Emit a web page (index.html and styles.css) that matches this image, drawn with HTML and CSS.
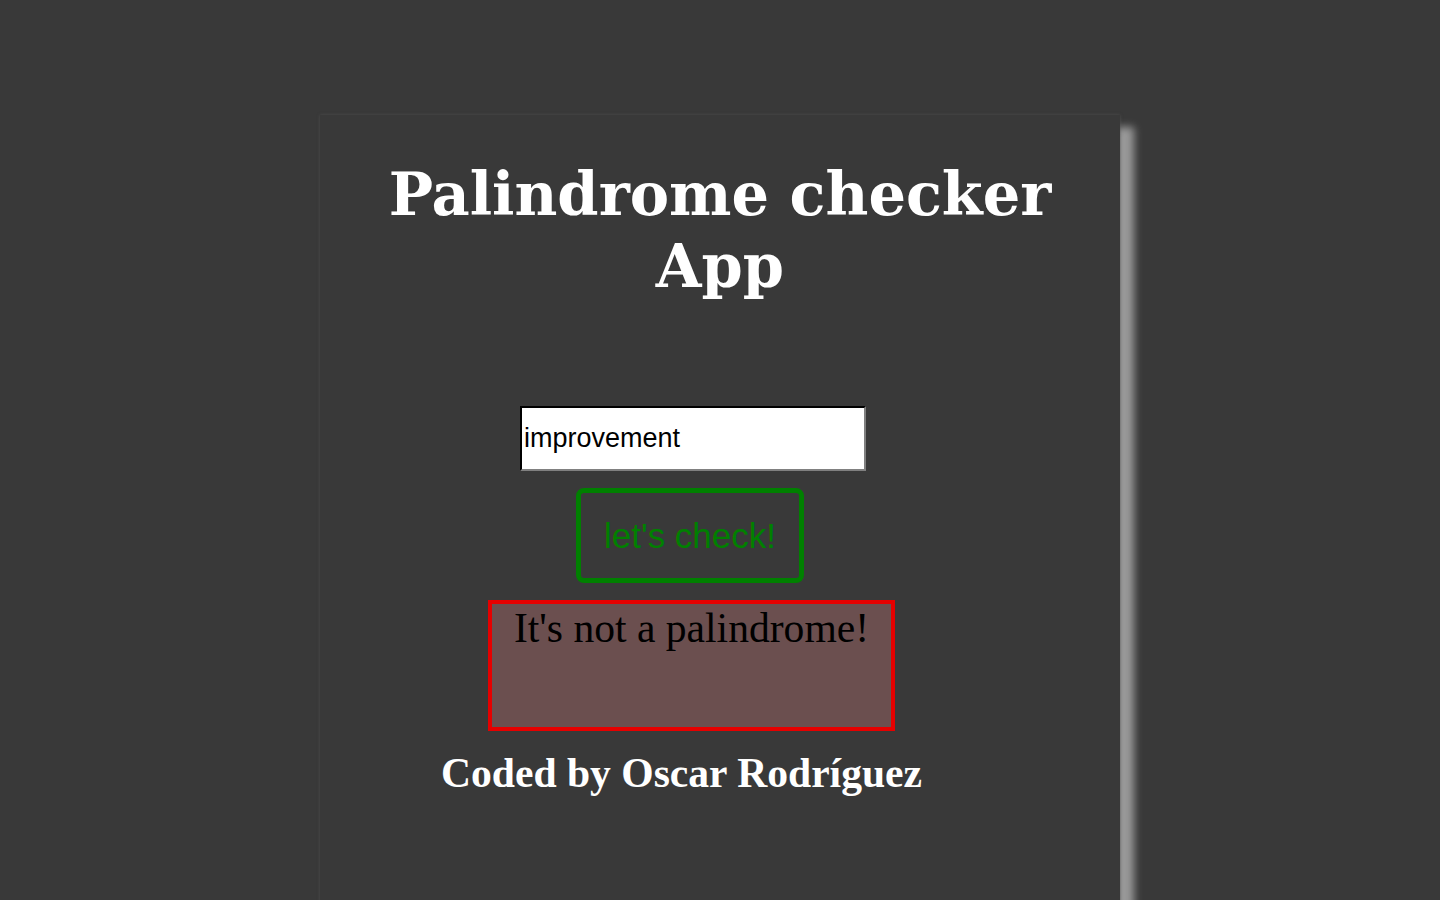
FILE: index.html
```html
<!DOCTYPE html>
<html lang="en">
<head>
<meta charset="utf-8">
<title>Palindrome checker App</title>
<link rel="stylesheet" href="styles.css">
</head>
<body>
<main class="card">
  <h1 class="title">Palindrome checker App</h1>
  <form class="form">
    <input class="word-input" type="text" value="improvement">
    <button class="check-btn" type="button">let's check!</button>
    <div class="result">It's not a palindrome!</div>
  </form>
  <h2 class="credit">Coded by Oscar Rodríguez</h2>
</main>
</body>
</html>
```

FILE: styles.css
```css
html, body {
  margin: 0;
  padding: 0;
  background: #393939;
  height: 100%;
  overflow: hidden;
}

.card {
  width: 800px;
  min-height: 900px;
  margin: 115px auto 0;
  background: #393939;
  box-shadow: 0 0 3px rgba(80, 80, 80, 0.9), 14px 12px 8px #999;
  display: flex;
  flex-direction: column;
  align-items: flex-start;
}

.title {
  align-self: stretch;
  margin: 44px 40px 0;
  font-family: "DejaVu Serif", Georgia, serif;
  font-weight: bold;
  font-size: 59px;
  line-height: 72px;
  color: #fff;
  text-align: center;
}

.form {
  display: flex;
  flex-direction: column;
  align-items: flex-start;
  margin-top: 103px;
}

.word-input {
  box-sizing: border-box;
  width: 346px;
  height: 65px;
  margin-left: 200px;
  padding: 0 0 0 2px;
  border: 2px inset #767676;
  border-color: #2e2e2e #808080 #808080 #2e2e2e;
  background: #fff;
  font-family: "Liberation Sans", Arial, sans-serif;
  font-size: 27px;
  color: #000;
  outline: none;
}

.check-btn {
  box-sizing: border-box;
  width: 228px;
  height: 95px;
  margin: 17px 0 0 256px;
  border: 5px solid #008000;
  border-radius: 8px;
  background: transparent;
  color: #008000;
  font-family: "Liberation Sans", Arial, sans-serif;
  font-size: 35px;
  padding: 0;
}

.result {
  box-sizing: border-box;
  width: 407px;
  height: 131px;
  margin: 17px 0 0 168px;
  border: 4px solid #e60000;
  background: #6b4f4f;
  color: #000;
  font-family: "Liberation Serif", "Times New Roman", serif;
  font-size: 41.6px;
  line-height: 48px;
  text-align: center;
}

.credit {
  margin: 18px 0 0 121px;
  font-family: "Liberation Serif", "Times New Roman", serif;
  font-weight: bold;
  font-size: 41.6px;
  line-height: 48px;
  color: #fff;
}
```
